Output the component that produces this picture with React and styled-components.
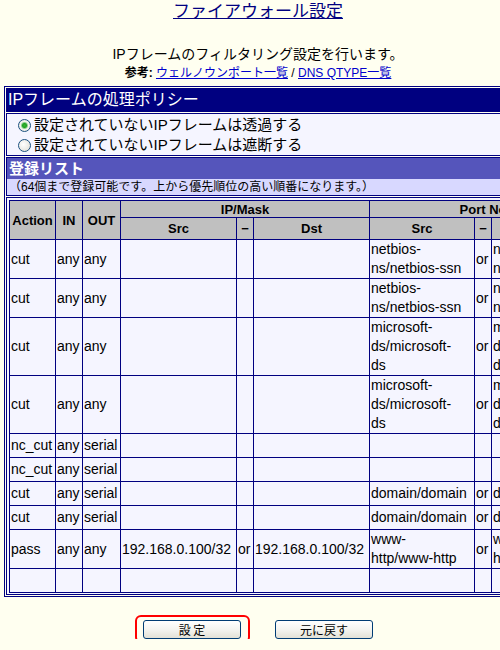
import styled, { createGlobalStyle, css } from "styled-components";

const GlobalStyle = createGlobalStyle`
  html, body {
    margin: 0;
    padding: 0;
    overflow: hidden;
    background: #fffff0;
  }
  body {
    font-family: "Liberation Sans", "Noto Sans CJK JP", sans-serif;
    color: #000;
  }
`;

const navy = "#000080";

// column widths, border to border
const cols = [46, 27, 38, 116, 17, 116, 105, 17, 105];

const netbios = ["netbios-", "ns/netbios-ssn"];
const microsoft = ["microsoft-", "ds/microsoft-", "ds"];
const domain = ["domain/domain"];
const www = ["www-", "http/www-http"];
const ip = "192.168.0.100/32";

const rules = [
  { h: 38, act: "cut", inIf: "any", outIf: "any", port: netbios },
  { h: 39, act: "cut", inIf: "any", outIf: "any", port: netbios },
  { h: 57, act: "cut", inIf: "any", outIf: "any", port: microsoft },
  { h: 57, act: "cut", inIf: "any", outIf: "any", port: microsoft },
  { h: 24, act: "nc_cut", inIf: "any", outIf: "serial" },
  { h: 24, act: "nc_cut", inIf: "any", outIf: "serial" },
  { h: 24, act: "cut", inIf: "any", outIf: "serial", port: domain },
  { h: 24, act: "cut", inIf: "any", outIf: "serial", port: domain },
  { h: 39, act: "pass", inIf: "any", outIf: "any", ip: true, port: www },
  { h: 24 },
];

const Page = styled.div`
  width: 512px;
  padding-left: 4px;
  box-sizing: border-box;
`;

const Title = styled.h1`
  margin: 0;
  text-align: center;
  font-size: 17px;
  font-weight: normal;
  line-height: 24px;
  color: ${navy};
  text-decoration: underline;
`;

const Lead = styled.p`
  margin: 21px 0 0;
  text-align: center;
  font-size: 14px;
  line-height: 18px;
`;

const RefLine = styled.p`
  margin: 2px 0 0;
  text-align: center;
  font-size: 12px;
  line-height: 16px;

  b {
    font-weight: bold;
  }
  a {
    color: #0000cc;
    text-decoration: underline;
  }
`;

const Frame = styled.table`
  margin-top: 5px;
  border: 1px solid ${navy};
  border-collapse: separate;
  border-spacing: 1px;
`;

const FrameCell = styled.td`
  border: 1px solid ${navy};
  padding: 0;
  background: #f5f5ff;
`;

const PolicyHead = styled(FrameCell)`
  background: ${navy};
  color: #fff;
  font-size: 16px;
  line-height: 22px;
  padding-left: 1px;
  white-space: nowrap;
`;

const RadioCell = styled(FrameCell)`
  padding: 1px 0 0 11px;
  font-size: 15px;
  line-height: 20px;
`;

const RadioRow = styled.label`
  display: flex;
  align-items: center;
  white-space: nowrap;
`;

const Radio = styled.span`
  flex: none;
  width: 11px;
  height: 11px;
  margin-right: 3px;
  border: 1px solid #1c5180;
  border-radius: 50%;
  background: radial-gradient(circle at 40% 40%, #ffffff 0, #e6e6df 70%, #d2d2c8 100%);
  ${(p) =>
    p.$checked &&
    css`
      background: radial-gradient(circle at 50% 50%, #35b535 0, #21a121 2px, #8fd08f 3px, #f4f4ee 4px, #dcdcd2 100%);
    `}
`;

const ListTitle = styled.div`
  background: #5555bb;
  color: #fff;
  font-size: 15px;
  font-weight: bold;
  line-height: 21px;
  padding-left: 2px;
`;

const ListNote = styled.div`
  background: #d8d8ff;
  font-size: 12px;
  line-height: 16px;
  padding-left: 2px;
  white-space: nowrap;
`;

const TableCell = styled(FrameCell)`
  padding: 2px 1px 1px 2px;
`;

const RuleTable = styled.table`
  border-collapse: collapse;
  table-layout: fixed;
  width: ${cols.reduce((a, b) => a + b, 0)}px;
  border: 1px solid ${navy};
`;

const Th = styled.th`
  border: 1px solid ${navy};
  background: #c0c0c0;
  padding: 0;
  font-size: 13px;
  font-weight: bold;
  text-align: center;
  white-space: nowrap;
  overflow: hidden;
`;

const HeadRow = styled.tr`
  height: ${(p) => p.$h}px;
`;

const BodyRow = styled.tr`
  height: ${(p) => p.$h}px;
`;

const Td = styled.td`
  border: 1px solid ${navy};
  background: #f5f5ff;
  padding: 0 0 0 1px;
  font-size: 14px;
  line-height: 19px;
  vertical-align: middle;
  white-space: nowrap;
  overflow: hidden;
`;

const Actions = styled.div`
  display: flex;
  align-items: flex-start;
  justify-content: center;
  gap: 34px;
  margin-top: 23px;
`;

const Highlight = styled.div`
  position: relative;
  display: flex;

  &::after {
    content: "";
    position: absolute;
    top: -5px;
    left: -8px;
    right: -9px;
    bottom: -4px;
    border: 2px solid #ff0000;
    border-radius: 6px;
    pointer-events: none;
  }
`;

const Button = styled.button`
  display: block;
  width: 98px;
  height: 19px;
  padding: 0;
  border: 1px solid #003c74;
  border-radius: 3px;
  background: linear-gradient(#ffffff, #f4f4f0 50%, #e3e1d6);
  font-family: "Noto Sans CJK JP", sans-serif;
  font-size: 12px;
  line-height: 17px;
  color: #000;
`;

const Lines = ({ lines }) =>
  lines
    ? lines.map((l, i) => (
        <span key={i}>
          {i > 0 && <br />}
          {l}
        </span>
      ))
    : null;

export default function App() {
  return (
    <Page>
      <GlobalStyle />
      <Title>ファイアウォール設定</Title>
      <Lead>IPフレームのフィルタリング設定を行います。</Lead>
      <RefLine>
        <b>参考: </b>
        <a href="#ports">ウェルノウンポート一覧</a> / <a href="#qtype">DNS QTYPE一覧</a>
      </RefLine>

      <Frame>
        <tbody>
          <tr>
            <PolicyHead>IPフレームの処理ポリシー</PolicyHead>
          </tr>
          <tr>
            <RadioCell>
              <RadioRow>
                <Radio $checked />
                設定されていないIPフレームは透過する
              </RadioRow>
              <RadioRow>
                <Radio />
                設定されていないIPフレームは遮断する
              </RadioRow>
            </RadioCell>
          </tr>
          <tr>
            <FrameCell>
              <ListTitle>登録リスト</ListTitle>
              <ListNote>（64個まで登録可能です。上から優先順位の高い順番になります。）</ListNote>
            </FrameCell>
          </tr>
          <tr>
            <TableCell>
              <RuleTable>
                <colgroup>
                  {cols.map((w, i) => (
                    <col key={i} style={{ width: w }} />
                  ))}
                </colgroup>
                <thead>
                  <HeadRow $h={17}>
                    <Th rowSpan={2}>Action</Th>
                    <Th rowSpan={2}>IN</Th>
                    <Th rowSpan={2}>OUT</Th>
                    <Th colSpan={3}>IP/Mask</Th>
                    <Th colSpan={3}>Port No</Th>
                  </HeadRow>
                  <HeadRow $h={22}>
                    <Th>Src</Th>
                    <Th>−</Th>
                    <Th>Dst</Th>
                    <Th>Src</Th>
                    <Th>−</Th>
                    <Th>Dst</Th>
                  </HeadRow>
                </thead>
                <tbody>
                  {rules.map((r, i) => (
                    <BodyRow key={i} $h={r.h}>
                      <Td>{r.act}</Td>
                      <Td>{r.inIf}</Td>
                      <Td>{r.outIf}</Td>
                      <Td>{r.ip && ip}</Td>
                      <Td>{r.ip && "or"}</Td>
                      <Td>{r.ip && ip}</Td>
                      <Td>
                        <Lines lines={r.port} />
                      </Td>
                      <Td>{r.port && "or"}</Td>
                      <Td>
                        <Lines lines={r.port} />
                      </Td>
                    </BodyRow>
                  ))}
                </tbody>
              </RuleTable>
            </TableCell>
          </tr>
        </tbody>
      </Frame>

      <Actions>
        <Highlight>
          <Button type="button">設 定</Button>
        </Highlight>
        <Button type="button">元に戻す</Button>
      </Actions>
    </Page>
  );
}
